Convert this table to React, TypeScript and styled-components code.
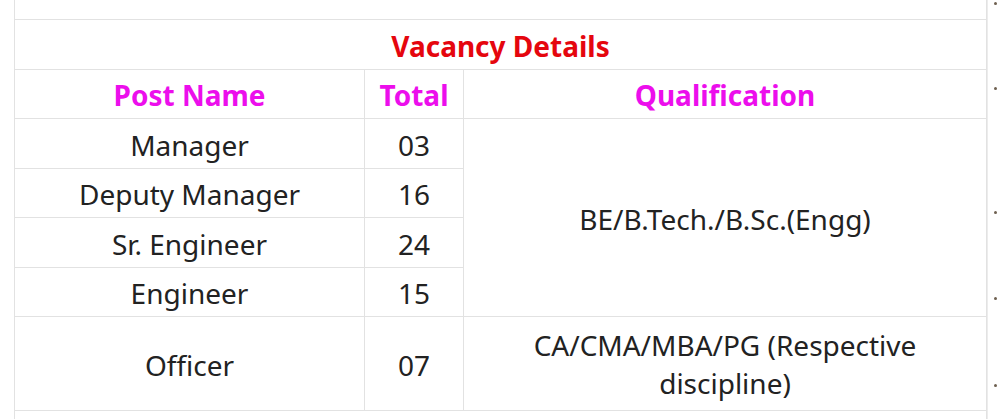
import React from 'react';
import styled, { createGlobalStyle } from 'styled-components';

const GlobalStyle = createGlobalStyle`
    html, body {
        margin: 0;
        padding: 0;
        background: #ffffff;
    }
    body {
        font-family: "Noto Sans", "Open Sans", Arial, sans-serif;
        color: #222222;
    }
`;

const Page = styled.div`
    display: flex;
    align-items: stretch;
    padding-left: 14px;
    width: 997px;
    height: 419px;
    box-sizing: border-box;
    overflow: hidden;
`;

const Table = styled.table`
    border-collapse: collapse;
    width: 975px;
    table-layout: fixed;
    font-size: 28px;
    line-height: 38px;
`;

const Cell = styled.td<{ $tall?: boolean }>`
    border: 1px solid #e2e2e2;
    padding: ${p => (p.$tall ? '8.5px 12px' : '6.75px 8px 3.75px')};
    text-align: center;
    vertical-align: middle;
`;

const LeadCell = styled.td`
    border: 1px solid #e2e2e2;
    border-top: none;
    height: 19px;
    padding: 0;
`;

const TitleCell = styled(Cell)`
    color: #e5060e;
    font-weight: 700;
`;

const HeadCell = styled(Cell)`
    color: #ec0eec;
    font-weight: 700;
`;

const Aside = styled.ul`
    list-style: none;
    margin: 0;
    padding: 0;
    border-left: 1px solid #ececec;
    flex: 1;
`;

const Dot = styled.li<{ $gap: number }>`
    width: 3px;
    height: 3px;
    border-radius: 50%;
    background: #6e6050;
    margin-left: 6px;
    margin-top: ${p => p.$gap}px;
`;

const rows = [
    { post: 'Manager', total: '03' },
    { post: 'Deputy Manager', total: '16' },
    { post: 'Sr. Engineer', total: '24' },
    { post: 'Engineer', total: '15' },
];

const dotGaps = [2, 82, 121, 83, 84];

function App() {
    return (
        <>
            <GlobalStyle />
            <Page>
                <Table>
                    <colgroup>
                        <col style={{ width: 350 }} />
                        <col style={{ width: 99 }} />
                        <col />
                    </colgroup>
                    <tbody>
                        <tr>
                            <LeadCell colSpan={3} />
                        </tr>
                        <tr>
                            <TitleCell colSpan={3}>Vacancy Details</TitleCell>
                        </tr>
                        <tr>
                            <HeadCell>Post Name</HeadCell>
                            <HeadCell>Total</HeadCell>
                            <HeadCell>Qualification</HeadCell>
                        </tr>
                        {rows.map((r, i) => (
                            <tr key={r.post}>
                                <Cell>{r.post}</Cell>
                                <Cell>{r.total}</Cell>
                                {i === 0 && <Cell rowSpan={4}>BE/B.Tech./B.Sc.(Engg)</Cell>}
                            </tr>
                        ))}
                        <tr>
                            <Cell>Officer</Cell>
                            <Cell>07</Cell>
                            <Cell $tall>CA/CMA/MBA/PG (Respective discipline)</Cell>
                        </tr>
                        <tr>
                            <Cell colSpan={3}>&nbsp;</Cell>
                        </tr>
                    </tbody>
                </Table>
                <Aside>
                    {dotGaps.map((g, i) => (
                        <Dot key={i} $gap={g} />
                    ))}
                </Aside>
            </Page>
        </>
    );
}

export default App;
